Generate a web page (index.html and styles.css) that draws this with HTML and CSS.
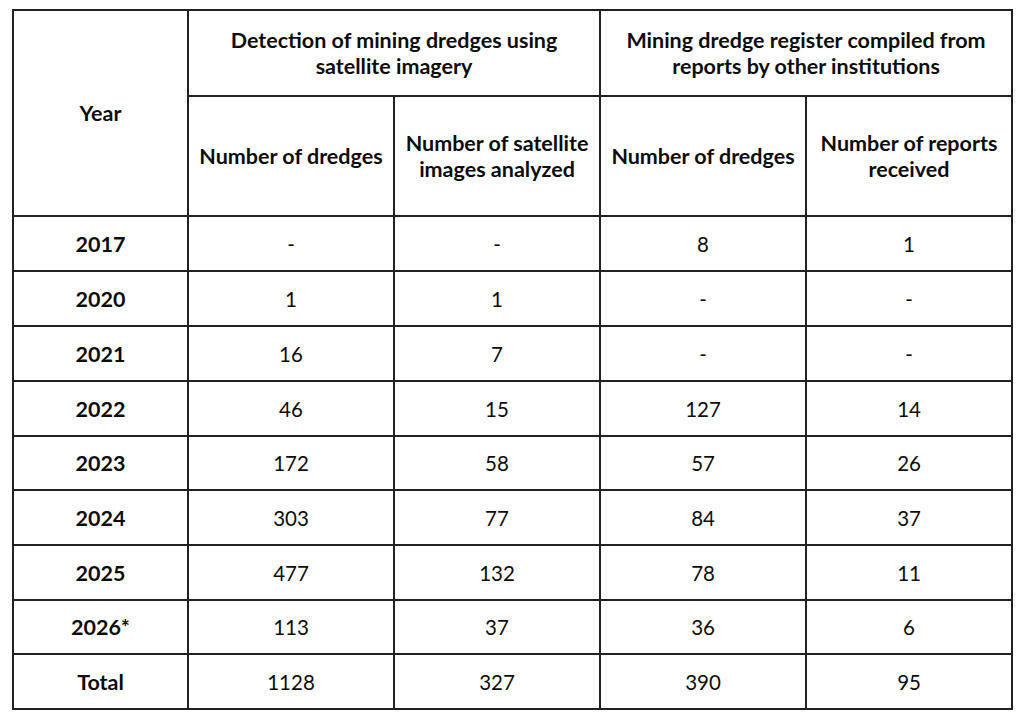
FILE: index.html
```html
<!DOCTYPE html>
<html lang="en">
<head>
<meta charset="utf-8">
<title>Mining dredges</title>
<link rel="stylesheet" href="styles.css">
</head>
<body>
<table class="dredges">
  <colgroup>
    <col class="c-year">
    <col class="c-data">
    <col class="c-data">
    <col class="c-data">
    <col class="c-data">
  </colgroup>
  <thead>
    <tr class="h1">
      <th rowspan="2">Year</th>
      <th colspan="2">Detection of mining dredges using<br>satellite imagery</th>
      <th colspan="2">Mining dredge register compiled from<br>reports by other institutions</th>
    </tr>
    <tr class="h2">
      <th>Number of dredges</th>
      <th>Number of satellite<br>images analyzed</th>
      <th>Number of dredges</th>
      <th>Number of reports<br>received</th>
    </tr>
  </thead>
  <tbody>
    <tr class="r55"><th>2017</th><td>-</td><td>-</td><td>8</td><td>1</td></tr>
    <tr class="r55"><th>2020</th><td>1</td><td>1</td><td>-</td><td>-</td></tr>
    <tr class="r55"><th>2021</th><td>16</td><td>7</td><td>-</td><td>-</td></tr>
    <tr class="r55"><th>2022</th><td>46</td><td>15</td><td>127</td><td>14</td></tr>
    <tr class="r54"><th>2023</th><td>172</td><td>58</td><td>57</td><td>26</td></tr>
    <tr class="r55"><th>2024</th><td>303</td><td>77</td><td>84</td><td>37</td></tr>
    <tr class="r55"><th>2025</th><td>477</td><td>132</td><td>78</td><td>11</td></tr>
    <tr class="r54"><th>2026*</th><td>113</td><td>37</td><td>36</td><td>6</td></tr>
    <tr class="r55"><th>Total</th><td>1128</td><td>327</td><td>390</td><td>95</td></tr>
  </tbody>
</table>
</body>
</html>
```
FILE: styles.css
```css
html, body {
  margin: 0;
  padding: 0;
  background: #ffffff;
}
body {
  padding: 9px 0 0 12px;
  font-family: Lato, "Open Sans", "Liberation Sans", sans-serif;
  color: #0d0d0d;
}
.dredges {
  border-collapse: collapse;
  table-layout: fixed;
  width: 1000px;
}
.c-year { width: 175px; }
.c-data { width: 206px; }
.dredges th,
.dredges td {
  border: 2px solid #222222;
  padding: 0;
  text-align: center;
  vertical-align: middle;
  line-height: 26px;
}
.dredges th {
  font-weight: 700;
  font-size: 21.5px;
}
.dredges td {
  font-weight: 400;
  font-size: 20.5px;
}
.h1 { height: 86px; }
.h2 { height: 120px; }
.r55 { height: 55px; }
.r54 { height: 54px; }
```
